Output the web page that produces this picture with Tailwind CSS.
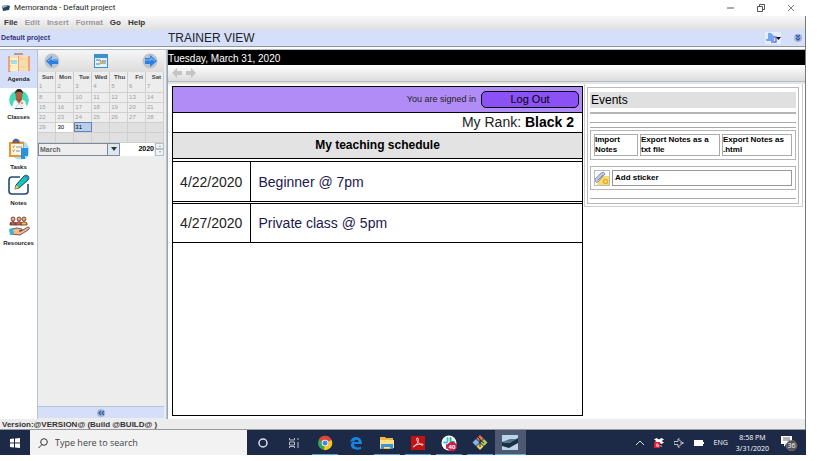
<!DOCTYPE html>
<html lang="en">
<head>
<meta charset="utf-8">
<title>Memoranda - Default project</title>
<script src="https://cdn.jsdelivr.net/npm/@tailwindcss/browser@4"></script>
</head>
<body class="bg-white font-['Liberation_Sans',Arial,sans-serif] text-black">
<div class="flex min-h-screen flex-col pr-[11px] pb-1.5">

<header class="flex h-4 shrink-0 items-center gap-1 pl-0.5 font-[Roboto,sans-serif] text-[8px] text-[#222]">
  <svg class="size-2" viewBox="0 0 8 8"><path d="M0 2l5-1 3 1-1 4-6 1z" fill="#27425d"/><path d="M0 2l5-1 1 1-5 2z" fill="#9bb8d0"/></svg>
  <h1>Memoranda - Default project</h1>
  <div class="ml-auto flex gap-5 pr-2.5">
    <button aria-label="Minimize"><svg class="size-2.5" viewBox="0 0 10 10"><path d="M1 5h7" stroke="#555"/></svg></button>
    <button aria-label="Restore"><svg class="size-2.5" viewBox="0 0 10 10" fill="none" stroke="#555"><path d="M1.500 3.500h5v5h-5zM3.500 3V1.500h5v5H7"/></svg></button>
    <button aria-label="Close"><svg class="size-2.5" viewBox="0 0 10 10"><path d="M2 2l6 6M8 2l-6 6" stroke="#555" stroke-width=".8"/></svg></button>
  </div>
</header>

<div class="flex flex-1 flex-col border-r border-[#777]">
<nav class="flex h-3.5 shrink-0 items-center gap-[7px] bg-linear-to-b from-[#f8f8f8] to-[#dfdfdf] pl-1 text-[8px] font-bold text-[#333]">
  <button>File</button><button class="text-[#999]" disabled>Edit</button><button class="text-[#999]" disabled>Insert</button><button class="text-[#999]" disabled>Format</button><button>Go</button><button>Help</button>
</nav>
<div class="flex h-[17px] shrink-0 items-center border-b border-[#8f979f] bg-[#d6dffa]">
  <div class="w-[168px] shrink-0 pl-px text-[7px] font-bold text-[#33337c]">Default project</div>
  <h2 class="text-[12px] leading-3 text-[#222]">TRAINER VIEW</h2>
  <button aria-label="New" class="ml-auto mr-3"><svg class="h-3 w-4" viewBox="0 0 16 12"><rect width="16" height="12" fill="#e6edfd"/><path d="M3 1h3l3 3v5H1V7h2z" fill="#74a5ef"/><path d="M6 10h5V5H9" stroke="#6b74e8" stroke-width="1.500" fill="none"/><path d="M11 5h5l-2.500 3z" fill="#111"/></svg></button>
  <button aria-label="Collapse" class="mr-0.5"><svg class="size-2.5" viewBox="0 0 10 10"><circle cx="5" cy="5" r="4" fill="#a9b7ca"/><path d="M3 2l2 2 2-2M3 5l2 2 2-2" stroke="#2458b4" fill="none" stroke-width="1.300"/></svg></button>
</div>

<div class="mt-0.5 flex flex-1 border-t border-[#b5bcc2]">
  <aside class="flex w-[37px] shrink-0 flex-col text-center text-[6px] leading-[8px] font-bold text-[#222]">
    <button class="flex h-[38px] flex-col items-center bg-[#d6dffa] pt-0.5">
      <svg class="h-[22px] w-6" viewBox="0 0 24 22"><path d="M1 4h3v16H1zM20 4h3v15h-3z" fill="#f4a071"/><path d="M3 4h18v15H3z" fill="#fbdcae"/><path d="M3 6h8v13H3z" fill="#fff0c9"/><path d="M7 1h9v2H7z" fill="#c9947c"/><path d="M4 8h6v4H4z" fill="#a3dde5"/><path d="M13 6h6v2h-6zM13 14h6v2h-6z" fill="#ffcf9c"/><path d="M11.500 4v15M1 9h3M1 14h3" stroke="#e9a582"/></svg>
      <span class="mt-px">Agenda</span></button>
    <button class="flex h-[46px] flex-col items-center pt-px">
      <svg class="h-[22px] w-5" viewBox="0 0 20 22"><circle cx="10" cy="11" r="9.800" fill="#45d9ba"/><path d="M3 18l2-6 4-2h3l4 2 2 6c-4 4-11 4-15 0z" fill="#f3f5fa"/><path d="M7 8h6v3l-3 4-3-4z" fill="#9b5634"/><ellipse cx="10" cy="6" rx="3.600" ry="4.600" fill="#aa633f"/><path d="M6 5c0-7 8-7 8 0l-2-2H8z" fill="#372522"/><path d="M7 11l6 7M13 11l-6 7" stroke="#b9c3d0" stroke-width=".7"/><path d="M6 19h8v1H6z" fill="#38404e"/><circle cx="13" cy="14" r="1.300" fill="#f5a445"/></svg>
      <span class="mt-0.5">Classes</span></button>
    <button class="flex h-10 flex-col items-center pt-1">
      <svg class="size-[22px]" viewBox="0 0 22 22"><circle cx="12" cy="12" r="9.500" fill="#a9e2f5"/><path d="M1 4h15v15H1z" fill="#e99331"/><path d="M3 6h12v11H3z" fill="#fff6df"/><path d="M5 2q3-3 6 0l1 3H4z" fill="#696675"/><path d="M4.500 8.500l1 1 1-2M4.500 12.500l1 1 1-2" stroke="#e37431" fill="none"/><path d="M8 9h6M8 13h4" stroke="#8494ab"/><path d="M13 10h7v8l-3 3h-4z" fill="#2b91dc"/><path d="M17 21v-3h3z" fill="#bce3fb"/></svg>
      <span class="mt-[3px]">Tasks</span></button>
    <button class="flex h-[38px] flex-col items-center">
      <svg class="h-[22px] w-[22px]" viewBox="0 0 22 22"><path d="M12 3H4Q1 3 1 6v11q0 3 3 3h13q3 0 3-3v-7" fill="none" stroke="#214b72" stroke-width="1.600"/><path d="M8 11l8-9q2-2 4 0t0 4l-9 8-4 1z" fill="#16c9b5" stroke="#173d5b"/><path d="M8 11l3 3-4 1z" fill="#f6cd55"/><path d="M16 2q2-2 4 0t0 4l-4-4z" fill="#288dc2"/></svg>
      <span class="mt-[3px]">Notes</span></button>
    <button class="flex h-[38px] flex-col items-center pt-1">
      <svg class="h-[20px] w-[22px]" viewBox="0 0 22 20"><g stroke="#513531" stroke-width=".8"><circle cx="5" cy="3" r="2" fill="#f3a979"/><circle cx="11" cy="3" r="2" fill="#f3a979"/><circle cx="16" cy="3" r="2" fill="#f3a979"/><path d="M2 9V7q3-3 6 0v2z" fill="#b95945"/><path d="M8 9V7q3-3 6 0v2z" fill="#ed5751"/><path d="M13 9V7q3-3 6 0v2z" fill="#f8b648"/><path d="M4 13l5-1 5 1q1 2-3 2h2l7-4q3 0 0 3l-8 5-9-1z" fill="#f4b88f"/></g><path d="M1 13l4-1 1 6-4 1z" fill="#39b5cd"/></svg>
      <span class="mt-[3px] self-center whitespace-nowrap">Resources</span></button>
  </aside>

  <section class="flex w-[130px] shrink-0 flex-col border-x border-[#b8c2d6] bg-[#ededed] pr-0.5">
    <div class="flex h-[22px] items-center justify-between bg-linear-to-b from-[#f6f6f6] to-[#dcdcdc] px-1.5">
      <button aria-label="Previous day"><svg class="size-4" viewBox="0 0 16 16"><circle cx="8" cy="8" r="7.500" fill="#bcc3cd"/><path d="M2 8l6-5v3h6v5H8v3z" fill="#2b7fe0"/><path d="M4 8l4-3v2h6" stroke="#8ec5ff" fill="none"/></svg></button>
      <button aria-label="Today"><svg class="h-3.5 w-3.5" viewBox="0 0 14 14"><path d="M0 0h14v14H0z" fill="#408fc8"/><path d="M1 4h12v9H1z" fill="#e1f2fb"/><path d="M2 6h4l2 3h4M2 10h4l2-3h4" stroke="#3c83bb" fill="none"/><path d="M6 7h3v3H6z" fill="#f1a33c"/></svg></button>
      <button aria-label="Next day"><svg class="size-4" viewBox="0 0 16 16"><circle cx="8" cy="8" r="7.500" fill="#bcc3cd"/><path d="M15 8L8 2v3H3v6h5v3z" fill="#2b7fe0"/><path d="M13 8L9 5v2H3" stroke="#8ec5ff" fill="none"/></svg></button>
    </div>
    <table class="w-full table-fixed border-collapse text-[6px] leading-[9px] text-[#a0a0a0] [&_td]:h-2.5 [&_td]:border-r [&_td]:border-b [&_td]:border-[#d0d0d0] [&_td]:p-0 [&_td]:pl-px [&_th]:h-2.5 [&_th]:border-r [&_th]:border-[#ccc] [&_th]:p-0 [&_th]:pr-0.5 [&_th]:text-right [&_th]:text-[#444]">
      <thead><tr><th>Sun</th><th>Mon</th><th>Tue</th><th>Wed</th><th>Thu</th><th>Fri</th><th>Sat</th></tr></thead>
      <tbody>
      <tr><td>1</td><td>2</td><td>3</td><td>4</td><td>5</td><td>6</td><td>7</td></tr>
      <tr><td>8</td><td>9</td><td>10</td><td>11</td><td>12</td><td>13</td><td>14</td></tr>
      <tr><td>15</td><td>16</td><td>17</td><td>18</td><td>19</td><td>20</td><td>21</td></tr>
      <tr><td>22</td><td>23</td><td>24</td><td>25</td><td>26</td><td>27</td><td>28</td></tr>
      <tr><td>29</td><td class="bg-white text-black">30</td><td class="bg-[#b8cfe5] text-black outline -outline-offset-1 outline-[#6382bf]">31</td><td class="bg-[#e0e0e0]"></td><td class="bg-[#e0e0e0]"></td><td class="bg-[#e0e0e0]"></td><td class="bg-[#e0e0e0]"></td></tr>
      <tr class="bg-[#e0e0e0]"><td></td><td></td><td></td><td></td><td></td><td></td><td></td></tr>
      </tbody>
    </table>
    <div class="flex h-[13px] text-[7px] font-bold">
      <div class="relative flex flex-1 border border-[#7a8a99]">
        <select aria-label="Month" class="w-full appearance-none bg-[#eee] pl-px leading-[11px] text-[#666]"><option>March</option></select>
        <span class="pointer-events-none absolute inset-y-0 right-0 flex w-3 items-center justify-center border-l border-[#7a8a99] bg-[#dce7f2]"><svg class="h-1 w-1.5" viewBox="0 0 6 4"><path d="M0 0h6L3 4z" fill="#333"/></svg></span>
      </div>
      <input aria-label="Year" value="2020" class="w-[34px] bg-white text-right">
      <div class="ml-px flex w-[9px] flex-col">
        <button aria-label="Next year" class="flex flex-1 items-center justify-center border border-[#b5bfca] bg-[#f0f3f6]"><svg class="h-0.5 w-0.5" viewBox="0 0 4 2"><path d="M0 2h4L2 0z" fill="#555"/></svg></button>
        <button aria-label="Previous year" class="flex flex-1 items-center justify-center border border-[#b5bfca] bg-[#f0f3f6]"><svg class="h-0.5 w-0.5" viewBox="0 0 4 2"><path d="M0 0h4L2 2z" fill="#555"/></svg></button>
      </div>
    </div>
    <button aria-label="Collapse calendar" class="mt-auto mb-px flex h-3 items-center justify-center border-t border-[#b8c2d6] bg-[#d6dffa]"><svg class="size-2.5" viewBox="0 0 10 10"><circle cx="5" cy="5" r="4" fill="#a9b7ca"/><path d="M5 3L3 5l2 2M8 3L6 5l2 2" stroke="#2458b4" fill="none" stroke-width="1.300"/></svg></button>
  </section>

  <main class="flex min-w-0 flex-1 flex-col border-l border-[#9aa5b0]">
    <div class="h-[15px] shrink-0 bg-black pt-0.5 text-[10px] leading-[13px] text-white">Tuesday, March 31, 2020</div>
    <div class="flex h-[17px] shrink-0 items-center gap-1 border-b border-[#b5bcc2] bg-linear-to-b from-white to-[#dcdcdc] pl-1">
      <button aria-label="Back"><svg class="size-2.5" viewBox="0 0 10 10"><path d="M0 5l5-5v3h5v4H5v3z" fill="#c4c4c4"/></svg></button>
      <button aria-label="Forward"><svg class="size-2.5" viewBox="0 0 10 10"><path d="M10 5L5 0v3H0v4h5v3z" fill="#c4c4c4"/></svg></button>
    </div>
    <div class="flex flex-1 items-start border-t-2 border-[#e4e4e4] pr-0.5 pb-[3px] pl-1">
      <section class="mt-0.5 flex flex-1 flex-col self-stretch border border-black">
        <div class="flex h-[26px] items-center justify-end border-b border-black bg-[#b18cf7] pr-[3px] text-[9px] text-[#222]">
          <span>You are signed in</span>
          <button class="ml-[5px] h-[17px] w-[98px] rounded-[5px] border border-black bg-[#8b51f5] text-[11px] leading-[13px] text-black">Log Out</button>
        </div>
        <p class="h-[19px] pt-px pr-2 text-right text-[14px] leading-[16px] text-[#222]">My Rank: <b class="text-black">Black 2</b></p>
        <h3 class="h-[27px] border-y border-black bg-[#e3e3e3] text-center text-[12px] leading-[25px] font-bold">My teaching schedule</h3>
        <table class="mt-0.5 w-full border-collapse text-[14px] leading-4">
          <tbody>
          <tr class="h-10 border-y border-black"><td class="w-[77px] border-r border-black p-0 text-center text-[#222]">4/22/2020</td><td class="p-0 pl-2 text-[#221850]">Beginner @ 7pm</td></tr>
          <tr class="h-0.5 border-b border-black"><td colspan="2" class="p-0"></td></tr>
          <tr class="h-[39px] border-b border-black"><td class="border-r border-black p-0 text-center text-[#222]">4/27/2020</td><td class="p-0 pl-2 text-[#221850]">Private class @ 5pm</td></tr>
          </tbody>
        </table>
      </section>
      <section class="ml-px w-[219px] shrink-0 border border-t-0 border-[#ccc] pt-[3px] pr-[3px] pb-0.5 pl-0.5">
        <div class="border border-[#bbb] px-0.5 pt-1 pb-1">
          <h3 class="h-4 bg-[#e0e0e0] pl-px text-[12px] leading-[17px]">Events</h3>
          <hr class="mt-1 border-t-2 border-[#b5b5b5]">
          <hr class="mt-2 border-t border-[#aaa]">
          <hr class="mt-1 border-t border-[#aaa]">
          <div class="mt-0.5 flex gap-0.5 border border-[#b5b5b5] p-[3px] text-[8px] leading-[10px] font-bold">
            <button class="h-[22px] w-11 shrink-0 border border-[#aaa] text-left">Import<br>Notes</button>
            <button class="h-[22px] w-20 shrink-0 border border-[#aaa] text-left">Export Notes as a<br>txt file</button>
            <button class="h-[22px] flex-1 border border-[#aaa] text-left whitespace-nowrap">Export Notes as<br>.html</button>
          </div>
          <div class="mt-1.5 flex gap-0.5 border border-[#b5b5b5] p-[3px] text-[8px] leading-[10px] font-bold">
            <div class="border border-[#bbb]"><svg class="h-3.5 w-3.5" viewBox="0 0 14 14"><path d="M5 5h9v9H2z" fill="#f7dc70"/><path d="M0 8l6-6q3-2 4 1L3 11q-3 1-3-3z" fill="#c3cad9" stroke="#8c93bb"/><path d="M3 9l5-5" stroke="#7c87a8"/><circle cx="10.500" cy="10.500" r="2" fill="#ffe98b" stroke="#efa827" stroke-width="1.500"/></svg></div>
            <button class="h-4 flex-1 border border-[#999] pl-0.5 text-left">Add sticker</button>
          </div>
          <hr class="mt-2 border-t border-[#aaa]">
        </div>
      </section>
    </div>
  </main>
</div>
<div class="h-[11px] shrink-0 overflow-hidden border-b border-[#999] bg-[#ececec] pl-0.5 text-[8px] leading-[12px] font-bold text-[#333]">Version:@VERSION@ (Build @BUILD@ )</div>
</div>

<footer class="flex h-[25px] shrink-0 items-stretch bg-[#1d2a47] font-['Open_Sans',sans-serif] text-white">
  <button aria-label="Start" class="flex w-[30px] items-center justify-center"><svg class="size-2.5" viewBox="0 0 10 10"><path d="M0 1l4-.5v4H0zM5 .4L10 0v4.500H5zM0 5.500h4v4L0 9zM5 5.500h5V10l-5-.5z" fill="#fff"/></svg></button>
  <label class="flex w-[217px] items-center bg-[#f2f2f2] pl-2"><svg class="size-2.5" viewBox="0 0 10 10" fill="none" stroke="#333"><circle cx="6" cy="4" r="3.300"/><path d="M4 6.500L.5 10"/></svg><input aria-label="Search" placeholder="Type here to search" class="ml-[7px] w-40 text-[9px] placeholder:text-[#444]"></label>
  <div class="flex [&_button]:flex [&_button]:w-[31px] [&_button]:items-center [&_button]:justify-center">
    <button aria-label="Cortana"><svg class="size-2.5" viewBox="0 0 10 10"><circle cx="5" cy="5" r="4" fill="none" stroke="#dde" stroke-width="1.500"/></svg></button>
    <button aria-label="Task view"><svg class="size-2.5" viewBox="0 0 10 10" fill="none" stroke="#b8bfcc"><path d="M.5 0v2h5V0M.5 4h5v3h-5zM.5 10V8.500h5V10M9 0v2M9 4v6"/></svg></button>
    <button aria-label="Chrome"><svg class="h-[25px] w-[26px]" viewBox="0 0 26 25"><circle cx="13" cy="13" r="7" fill="#37a852"/><path d="M13 13L7 9.400A7 7 0 0 1 19.500 10z" fill="#e54435"/><path d="M13 13l6.500-3A7 7 0 0 1 12 20z" fill="#fbc51c"/><circle cx="13" cy="13" r="3.300" fill="#fff"/><circle cx="13" cy="13" r="2.500" fill="#4285f4"/><path d="M0 24h26v1H0z" fill="#5a9fdc"/></svg></button>
    <button aria-label="Edge"><svg class="h-3.5 w-3.5" viewBox="0 0 14 14"><path d="M1 6.500C2 2.500 4 1 7 1c4 0 6 3 6 7H5c0 4 5 4 7 2.500V13C7 15 1 13 2 8c.5-2 2-3 4-3.500C3.500 4.500 2 5.500 1 6.500zM5 6h4.500c0-3-4-3-4.500 0z" fill="#1685e0"/></svg></button>
    <button aria-label="File Explorer"><svg class="h-[25px] w-[26px]" viewBox="0 0 26 25"><path d="M6 7h5l1 1h7v11H6z" fill="#f4b73e"/><path d="M6 10h14v8H6z" fill="#ffe08a"/><path d="M7 14h12v5h-3v-2h-6v2H7z" fill="#3c95d6"/><path d="M0 24h26v1H0z" fill="#5a9fdc"/></svg></button>
    <button aria-label="Acrobat"><svg class="h-[25px] w-[26px]" viewBox="0 0 26 25"><path d="M6 6h14v14H6z" fill="#c11313"/><path d="M12 8c3 0 1 6-3 9-2 0 1-3 8-3 3 1 0 2-2 0-3-2-4-5-3-6z" fill="none" stroke="#fff" stroke-width=".8"/><path d="M0 24h26v1H0z" fill="#5a9fdc"/></svg></button>
    <button aria-label="Slack"><svg class="h-[25px] w-[26px]" viewBox="0 0 26 25"><circle cx="13" cy="13" r="7.500" fill="#fff"/><g stroke-width="2" stroke-linecap="round"><path d="M11.500 8v3" stroke="#36c5f0"/><path d="M14.500 8v3" stroke="#2eb67d"/><path d="M8 12.500h3" stroke="#36c5f0"/><path d="M15 12h3" stroke="#2eb67d"/><path d="M11 15v3" stroke="#e01e5a"/></g><circle cx="16" cy="16.500" r="4.800" fill="#cf1f48"/><text x="16" y="18.500" text-anchor="middle" font-size="6" font-weight="bold" fill="#fff">40</text><path d="M0 24h26v1H0z" fill="#5a9fdc"/></svg></button>
    <button aria-label="Git"><svg class="h-[25px] w-[26px]" viewBox="0 0 26 25"><path d="M13 5l3.500 3.500L13 12 9.500 8.500z" fill="#e57255"/><path d="M9 9l3.500 3.500L9 16l-3.500-3.500z" fill="#80b3ef"/><path d="M17 9l3.500 3.500L17 16l-3.500-3.500z" fill="#a9cf62"/><path d="M13 13l3.500 3.500L13 20l-3.500-3.500z" fill="#f0d35e"/><path d="M11 7l2 2v8M13 10l4 3" stroke="#222" fill="none"/><path d="M0 24h26v1H0z" fill="#5a9fdc"/></svg></button>
    <button aria-label="Memoranda" class="bg-[#4d5970]"><svg class="h-[25px] w-[31px]" viewBox="0 0 31 25"><path d="M7 5h16v15H7z" fill="#b9d5e9"/><path d="M7 12l7 1 9-5v5l-9 5-7-2z" fill="#1c3044"/><path d="M7 12l8-3 7 0-8 4z" fill="#54718a"/><path d="M0 24h31v1H0z" fill="#6bade5"/></svg></button>
  </div>
  <div class="ml-auto flex items-center text-[7px] leading-[11px]">
    <button aria-label="Hidden icons" class="mr-2.5"><svg class="h-1.5 w-2" viewBox="0 0 8 6"><path d="M0 5l4-4 4 4" stroke="#ddd" fill="none"/></svg></button>
    <svg class="mr-2.5 h-2.5 w-2.5" viewBox="0 0 10 10"><path d="M2.500 0L5 1.500 7.500 0 10 1.500 7.500 3 10 4.500 7.500 6 5 4.500 2.500 6 0 4.500 2.500 3 0 1.500z" fill="#fff"/><path d="M6 7l2 1 1-1-2 2z" fill="#fff"/><path d="M0 4h6v6H0z" fill="#e31b32"/><path d="M3.500 5L2 8h3M4 6v3" stroke="#fff" stroke-width=".7" fill="none"/></svg>
    <svg class="mr-2.5 h-2.5 w-2.5" viewBox="0 0 10 10" fill="none" stroke="#ccc" stroke-width=".9"><path d="M0 3.500h4V1l5 4-5 4V6.500H0zM4 0h2M4 10h2M6 5h4"/></svg>
    <svg class="mr-2.5 h-1.5 w-2.5" viewBox="0 0 10 6"><path d="M0 0h9v6H0zM9 2h1v2H9z" fill="#fff"/></svg>
    <span class="mr-2">ENG</span>
    <div class="text-center">8:58 PM<br>3/31/2020</div>
    <button aria-label="Notifications" class="mr-2 ml-3"><svg class="h-4 w-[17px]" viewBox="0 0 17 16"><path d="M0 1h11v8H5l-2 3V9H0z" fill="#fff"/><path d="M2 3h7M2 5h7" stroke="#667"/><circle cx="10.500" cy="10.500" r="5.300" fill="#555" stroke="#888" stroke-width=".6"/><text x="10.500" y="13" text-anchor="middle" font-size="7" fill="#fff">36</text></svg></button>
  </div>
</footer>
</div>
</body>
</html>
